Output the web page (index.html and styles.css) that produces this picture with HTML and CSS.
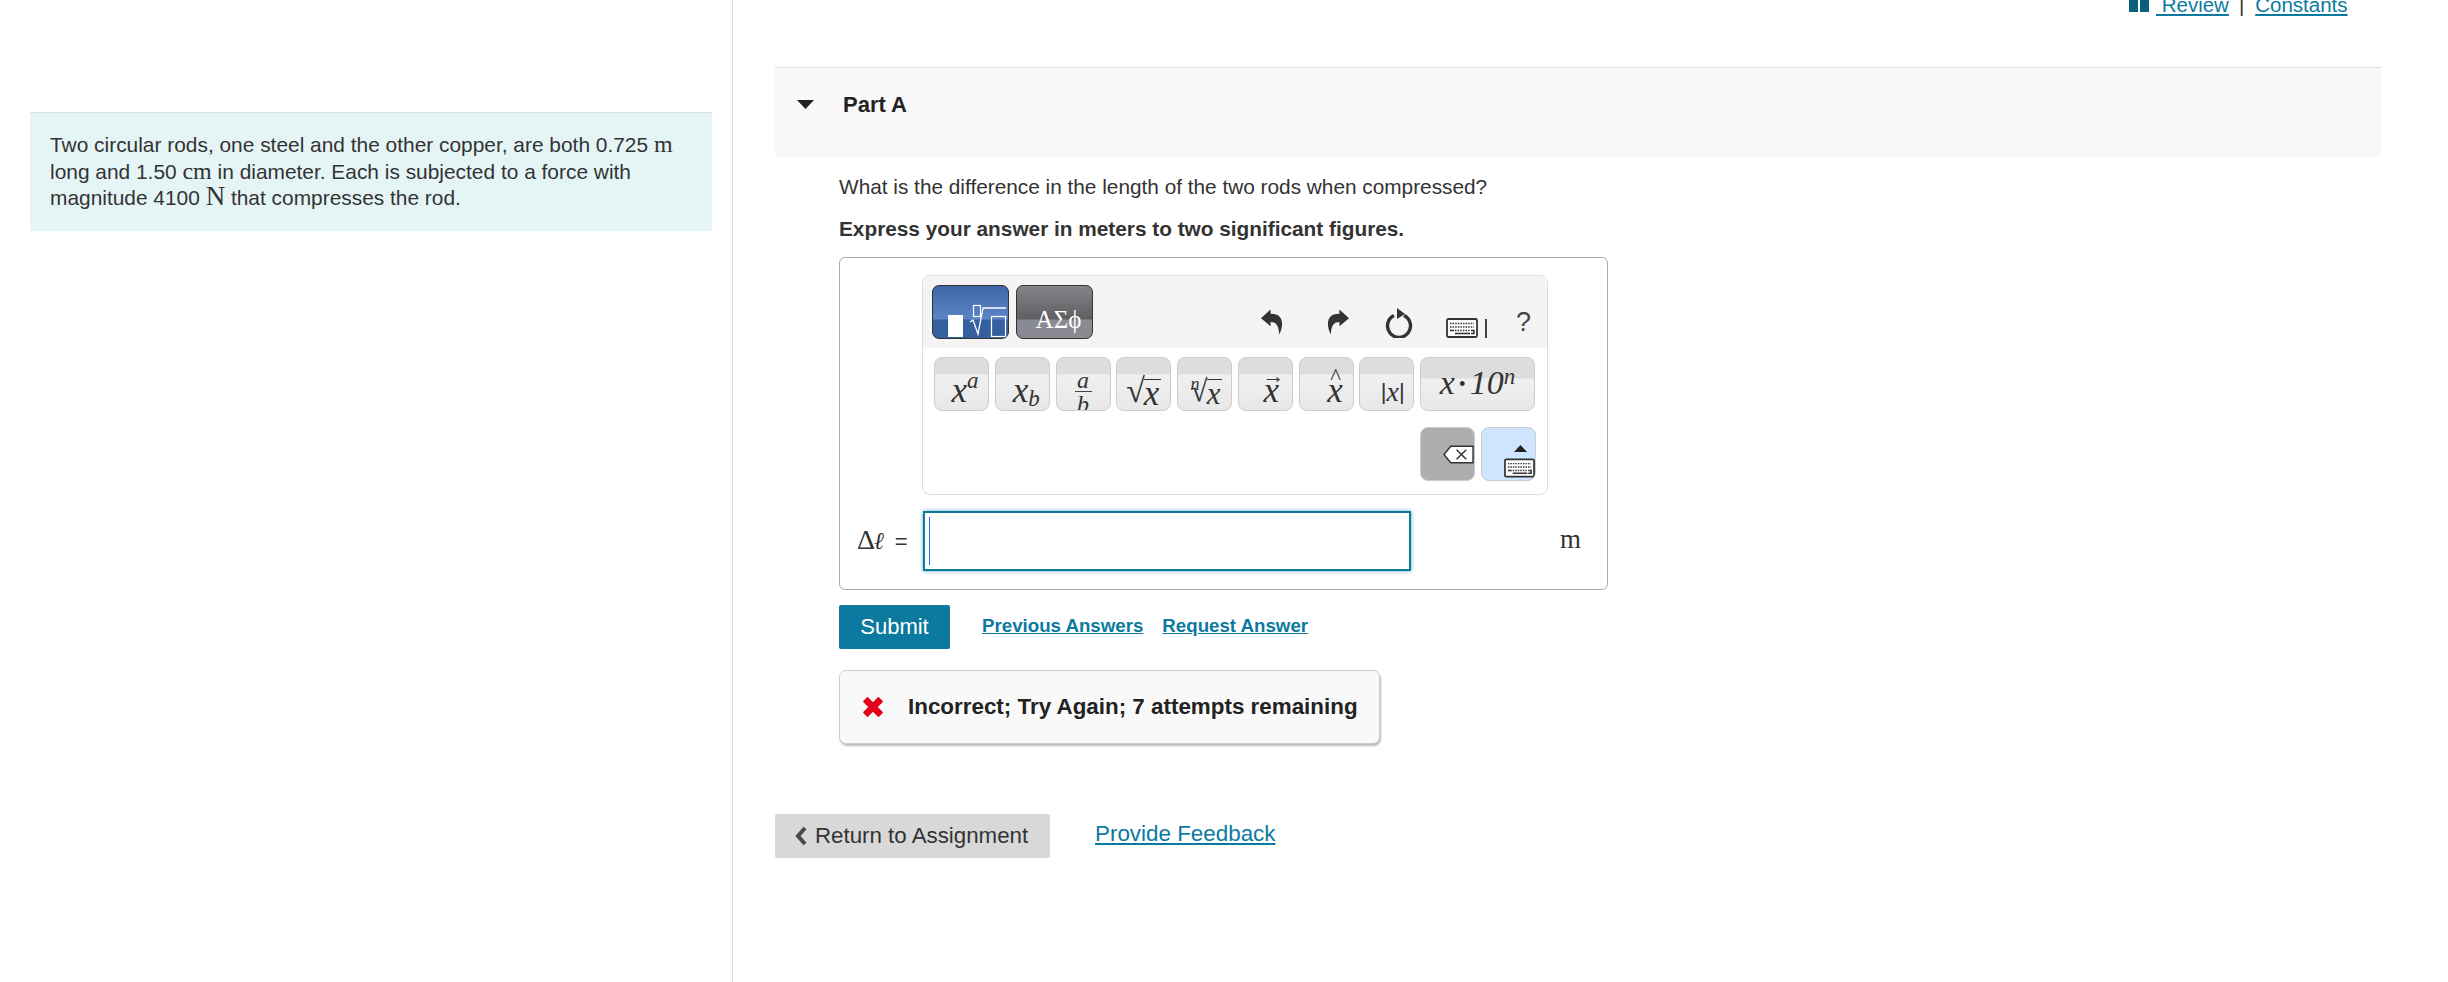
FILE: index.html
```html
<!DOCTYPE html>
<html lang="en">
<head>
<meta charset="utf-8">
<title>Part A</title>
<link rel="stylesheet" href="styles.css">
</head>
<body>
<svg class="defs" width="0" height="0" aria-hidden="true">
  <symbol id="kbd" viewBox="0 0 32 20">
    <rect x="1" y="1" width="30" height="18" rx="1.5" fill="#fff" stroke="#333" stroke-width="1.8"/>
    <path d="M4 5.500h24M4 9h24" stroke="#333" stroke-width="1.500" stroke-dasharray="1.500 1.100"/>
    <path d="M4 12.500h4M9 15.500h15M25 12.500h3v3h-3" fill="none" stroke="#333" stroke-width="1.500"/>
    <path d="M9 12.500h15" stroke="#333" stroke-width="1.500" stroke-dasharray="1.500 1.100"/>
  </symbol>
</svg>
<div class="page">
  <aside class="left">
    <div class="intro">Two circular rods, one steel and the other copper, are both 0.725 <span class="mj">m</span> long and 1.50 <span class="mj">cm</span> in diameter. Each is subjected to a force with magnitude 4100 <span class="mj big">N</span> that compresses the rod.</div>
  </aside>
  <main class="right">
    <div class="topbar">
      <svg class="book" viewBox="0 0 20 12"><path d="M0 0h9v12H0zM11 0h9v12h-9z" fill="#0a5f7c"/></svg>
      <a class="link review" href="#">&nbsp;Review</a>
      <span class="sep">|</span>
      <a class="link" href="#">Constants</a>
    </div>
    <section class="band">
      <svg class="caret" viewBox="0 0 17 9"><path d="M0 0h17L8.500 9z" fill="#222"/></svg>
      <h2 class="part">Part A</h2>
    </section>
    <div class="content">
      <p class="q">What is the difference in the length of the two rods when compressed?</p>
      <p class="q strong">Express your answer in meters to two significant figures.</p>
      <div class="answerbox">
        <div class="tool">
          <div class="toolhead">
            <div class="tab blue">
              <svg viewBox="0 0 77 54" width="77" height="54">
                <rect x="16" y="30" width="15" height="22" fill="#fff"/>
                <rect x="41.500" y="20.500" width="7" height="11" fill="none" stroke="#fff" stroke-width="1.2"/>
                <path d="M38 37l3-2 5 14 5-26h23" fill="none" stroke="#fff" stroke-width="1.3"/>
                <rect x="59.500" y="31.500" width="14" height="20" fill="none" stroke="#fff" stroke-width="1.2"/>
              </svg>
            </div>
            <div class="tab grey"><span>ΑΣϕ</span></div>
            <svg class="ic undo" viewBox="0 0 24 26"><path d="M10 0L0 9l10 8.500v-4.500C15.500 13 18.500 16 19 26 25 14 22 4 10 4.500z" fill="#333"/></svg>
            <svg class="ic redo" viewBox="0 0 24 26"><path d="M14 0l10 9-10 8.500v-4.500C8.500 13 5.500 16 5 26-1 14 2 4 14 4.500z" fill="#333"/></svg>
            <svg class="ic reset" viewBox="0 0 28 30"><path d="M9 7.500a11.500 11.500 0 1 0 10 0" fill="none" stroke="#333" stroke-width="3.400"/><path d="M12 0l8 6-8 5z" fill="#333"/></svg>
            <svg class="ic kb"><use href="#kbd"/></svg>
            <span class="bar"></span>
            <span class="help">?</span>
          </div>
          <div class="row">
            <button class="k g1"><i>x<sup>a</sup></i></button>
            <button class="k g2"><i>x<sub>b</sub></i></button>
            <button class="k frac"><i class="num">a</i><i class="den">b</i></button>
            <button class="k root"><span class="rad">√</span><i class="over">x</i></button>
            <button class="k root nth"><sup class="idx">n</sup><span class="rad">√</span><i class="over">x</i></button>
            <button class="k g3"><i class="vec">x</i></button>
            <button class="k g4"><i class="hat">x</i></button>
            <button class="k abs"><span>|</span><i>x</i><span>|</span></button>
            <button class="k wide"><i>x<b>•</b>10<sup>n</sup></i></button>
          </div>
          <div class="row end">
            <button class="k del">
              <svg viewBox="0 0 32 19" width="32" height="19"><path d="M8 1h23v17H8L1 9.500z" fill="#fff" stroke="#333" stroke-width="1.500"/><path d="M14 4.500l10 10M24 4.500l-10 10" stroke="#333" stroke-width="1.500"/></svg>
            </button>
            <button class="k kbt">
              <svg class="tri" viewBox="0 0 13 7"><path d="M6.500 0L13 7H0z" fill="#222"/></svg>
              <svg class="kbs"><use href="#kbd"/></svg>
            </button>
          </div>
        </div>
        <div class="entry">
          <span class="lhs"><span class="delta">Δ</span><i class="ell">ℓ</i> <span class="eq">=</span></span>
          <div class="input"><span class="cursor"></span></div>
          <span class="unit">m</span>
        </div>
      </div>
      <div class="actions">
        <button class="submit">Submit</button>
        <a class="link small first" href="#">Previous Answers</a>
        <a class="link small" href="#">Request Answer</a>
      </div>
      <div class="feedback">
        <svg class="xmark" viewBox="0 0 22 22"><path d="M3 6l3-3 5 5 5-5 3 3-5 5 5 5-3 3-5-5-5 5-3-3 5-5z" fill="#e2001a" stroke="#e2001a" stroke-width="2" stroke-linejoin="round"/></svg>
        <span>Incorrect; Try Again; 7 attempts remaining</span>
      </div>
    </div>
    <div class="foot">
      <button class="back"><svg class="chev" viewBox="0 0 12 20"><path d="M10 2L3 10l7 8" fill="none" stroke="#4a4a4a" stroke-width="4"/></svg>Return to Assignment</button>
      <a class="link feed" href="#">Provide Feedback</a>
    </div>
  </main>
</div>
</body>
</html>
```
FILE: styles.css
```css
* { box-sizing: border-box; }
html, body { margin: 0; height: 100%; }
body { font-family: "Liberation Sans", Arial, sans-serif; color: #333; background: #fff; overflow: hidden; }
.defs { position: absolute; }
.page { display: flex; height: 982px; }
.left { width: 733px; flex: none; border-right: 1px solid #d3dbe3; padding: 112px 20px 0 30px; }
.intro { background: #e5f5f6; border-top: 1px solid #ddd; height: 119px; padding: 19px 30px 0 20px; font-size: 20.900px; line-height: 26.500px; }
.mj { font-family: "Liberation Serif", serif; font-size: 24px; line-height: 0; }
.mj.big { font-size: 27px; line-height: 0; }
.right { flex: 1; padding-left: 42px; min-width: 0; }
.topbar { height: 67px; width: 1606px; display: flex; align-items: flex-start; padding-left: 1354px; font-size: 20.500px; line-height: 20px; margin-top: -5px; margin-bottom: 5px; }
.book { width: 20px; height: 12px; margin-right: 7px; margin-top: 5px; }
.link { color: #0b7aa0; text-decoration: underline; }
.review { margin-right: 10px; }
.sep { margin-right: 11px; }
.band { width: 1606px; height: 90px; background: #f8f8f8; border-top: 1px solid #ddd; display: flex; align-items: flex-start; padding: 32px 0 0 22px; }
.caret { width: 17px; height: 9px; margin-top: 0; }
.part { margin: -10px 0 0 29px; font-size: 22px; line-height: 30px; font-weight: bold; color: #222; }
.content { padding-left: 64px; }
.q { margin: 0; font-size: 20.800px; line-height: 24px; padding-top: 18px; }
.q.strong { font-weight: bold; padding-top: 18px; }
.answerbox { margin-top: 16px; width: 769px; height: 333px; border: 1px solid #aaa; border-radius: 6px; padding: 17px 0 0 82px; }
.tool { width: 626px; height: 220px; border: 1px solid #ddd; border-radius: 8px; padding-top: 0; }
.toolhead { height: 72px; background: #f4f4f4; border-radius: 8px 8px 0 0; display: flex; align-items: flex-start; padding: 9px 0 0 9px; }
.tab { width: 77px; height: 54px; border-radius: 7px; border: 1px solid #333; overflow: hidden; display: flex; }
.tab.blue { background: linear-gradient(#3d66a8 0, #5d84c6 33px, #35609f 34px, #35609f 100%); }
.tab.blue svg { flex: none; margin: -1px; }
.tab.grey { margin-left: 7px; background: linear-gradient(#858589 0, #5f5f62 33px, #8a8a92 34px, #8a8a92 100%); color: #fff; font-family: "Liberation Serif", serif; font-size: 25px; line-height: 28px; align-items: flex-end; justify-content: center; padding: 0 0 4px 8px; }
.ic { display: block; flex: none; }
.undo { width: 23px; height: 26px; margin: 24px 0 0 168px; }
.redo { width: 23px; height: 26px; margin: 24px 0 0 42px; }
.reset { width: 28px; height: 30px; margin: 23px 0 0 36px; }
.kb { width: 32px; height: 20px; margin: 33px 0 0 33px; }
.bar { width: 2px; height: 19px; background: #444; margin: 34px 0 0 7px; }
.help { font-size: 27px; line-height: 30px; color: #444; margin: 22px 0 0 29px; }
.row { display: flex; gap: 5.750px; padding: 9px 0 0 11px; }
.row.end { justify-content: flex-end; padding: 16px 11px 0 0; gap: 6px; }
.k { width: 55px; height: 54px; padding: 0; flex: none; border: 1px solid #ccc; border-radius: 8px; background: linear-gradient(#ddd 0, #ddd 16px, #f0f0f0 17px, #e8e8e8 100%); color: #333; font-family: "Liberation Serif", serif; font-size: 35px; line-height: 30px; display: flex; justify-content: center; align-items: flex-end; position: relative; overflow: hidden; padding-bottom: 4px; }
.k i { font-style: italic; }
.k sup, .k sub { font-size: 23px; line-height: 0; }
.k sub { position: relative; top: 4px; vertical-align: baseline; }
.k sup { position: relative; top: -14px; vertical-align: baseline; }
.g1 { padding-left: 7px; }
.g2 { padding-left: 8px; }
.g3 { padding-left: 12px; }
.g4 { padding-left: 18px; }
.frac { flex-direction: column; align-items: center; justify-content: flex-start; padding: 14px 0 0 0; }
.frac .num { line-height: 17px; font-size: 24px; padding: 0 0 2px; border-bottom: 1.500px solid #444; width: 17px; text-align: center; }
.frac .den { line-height: 24px; font-size: 24px; }
.root { padding-bottom: 2px; }
.rad { font-size: 34px; line-height: 34px; }
.over { border-top: 1.500px solid #333; line-height: 28px; margin-left: -1px; padding-right: 2px; }
.nth { font-size: 31px; padding-left: 4px; }
.nth .rad { font-size: 31px; }
.k .idx { font-size: 18px; font-style: italic; top: -24px; margin-right: -9px; }
.vec, .hat { position: relative; }
.vec::before { content: "→"; position: absolute; top: -7px; left: -1px; font-size: 22px; font-style: normal; line-height: 14px; }
.hat::before { content: "^"; position: absolute; top: -9px; left: 3px; font-size: 23px; font-style: normal; line-height: 20px; }
.abs { font-size: 28px; align-items: flex-end; padding: 0 0 3px 12px; }
.abs span { font-family: "Liberation Sans", sans-serif; font-size: 22px; font-weight: normal; }
.wide { width: 115px; background: linear-gradient(#ddd 0, #ddd 20px, #f0f0f0 21px, #e8e8e8 100%); font-size: 34px; padding-bottom: 8px; }
.wide b { font-size: 20px; font-weight: normal; font-style: normal; margin: 0 4px; position: relative; top: -3px; }
.wide sup { font-size: 23px; top: -10px; }
.del { background: #aeaeae; align-items: flex-start; justify-content: flex-start; padding: 17px 0 0 22px; }
.kbt { background: #cfe4ff; display: block; padding: 0; }
.tri { position: absolute; top: 17px; right: 8px; width: 13px; height: 7px; }
.kbs { position: absolute; top: 30px; right: 0; width: 31px; height: 20px; }
.entry { display: flex; align-items: center; margin-top: 15px; height: 61px; margin-left: -82px; }
.lhs { width: 83px; padding-left: 17px; font-family: "DejaVu Serif", serif; font-size: 24px; white-space: nowrap; margin-top: -2px; }
.delta { font-family: "Liberation Serif", serif; font-size: 28px; }
.ell { font-family: "DejaVu Serif", serif; margin-left: -1px; }
.eq { font-family: "Liberation Sans", sans-serif; font-size: 22px; margin-left: 3px; }
.input { width: 488px; height: 60px; border: 2px solid #0d7a9c; box-shadow: 0 0 4px #5ba8bf; background: #fff; padding: 4px; }
.cursor { display: block; width: 1px; height: 48px; background: #2a62d8; }
.unit { margin-left: 149px; font-family: "Liberation Serif", serif; font-size: 27px; margin-top: -2px; }
.actions { display: flex; align-items: flex-start; margin-top: 15px; }
.submit { width: 111px; height: 44px; border: 0; border-radius: 2px; background: #0c7a9f; color: #fff; font: 22px "Liberation Sans", sans-serif; padding: 0; }
.small { font-size: 18.700px; font-weight: bold; line-height: 22px; }
.first { margin: 10px 19px 0 32px; }
.small:not(.first) { margin-top: 10px; }
.feedback { width: 541px; height: 74px; margin-top: 21px; border: 1px solid #ccc; border-radius: 7px; background: #f9f9f9; box-shadow: 1px 2px 2px #bbb; display: flex; align-items: center; padding-left: 21px; font-size: 22.400px; font-weight: bold; color: #222; white-space: nowrap; }
.xmark { width: 24px; height: 24px; margin-right: 23px; }
.foot { display: flex; align-items: flex-start; margin-top: 70px; }
.back { width: 275px; height: 44px; border: 0; border-radius: 2px; background: #d8d8d8; color: #333; font: 22.300px "Liberation Sans", sans-serif; padding: 0 0 0 20px; display: flex; align-items: center; }
.chev { width: 12px; height: 20px; margin-right: 8px; }
.feed { font-size: 22.400px; line-height: 26px; margin: 7px 0 0 45px; }
```
